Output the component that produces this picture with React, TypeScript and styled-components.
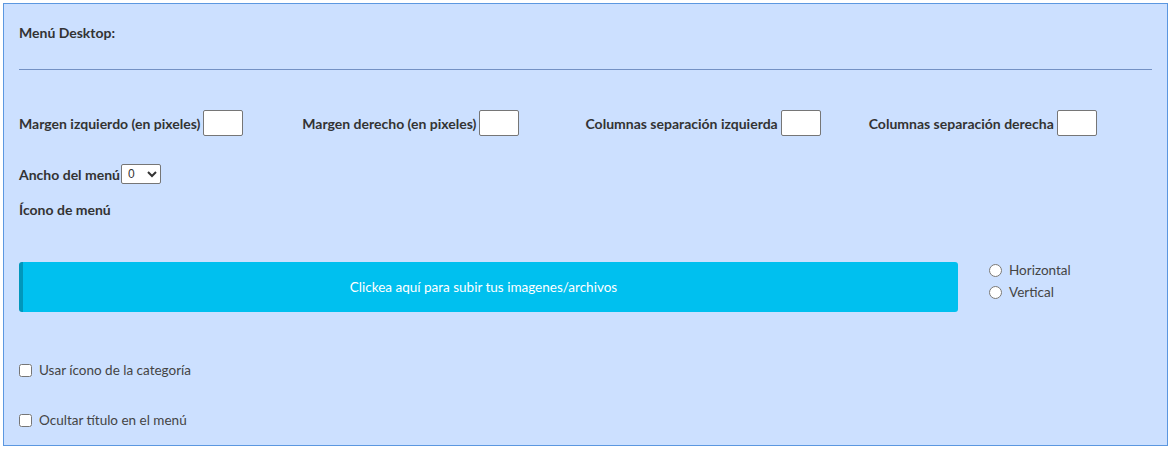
import * as React from 'react'
import styled, { createGlobalStyle } from 'styled-components'

const GlobalStyle = createGlobalStyle`
  html, body {
    margin: 0;
    padding: 0;
    background: #ffffff;
  }
  body {
    font-family: Lato, "Open Sans", "Liberation Sans", sans-serif;
    font-size: 14px;
    color: #333333;
  }
`

const Page = styled.div`
  padding: 3px 4px 4px 3px;
`

const Panel = styled.div`
  display: flex;
  flex-direction: column;
  background: #cce0ff;
  border: 1px solid #5b97e0;
  padding: 19px 15px 15px 15px;
  height: 443px;
  box-sizing: border-box;
`

const Title = styled.div`
  font-weight: 700;
  font-size: 14px;
  line-height: 20px;
  color: #333333;
`

const Divider = styled.hr`
  margin: 26px 0 0 0;
  border: none;
  border-top: 1px solid #7391c4;
  height: 0;
`

const FieldRow = styled.div`
  display: grid;
  grid-template-columns: repeat(4, 1fr);
  margin-top: 40px;
`

const Field = styled.label<{ $h?: number }>`
  display: flex;
  align-items: center;
  gap: 3px;
  font-weight: 700;
  font-size: 14px;
  color: #333333;
  height: ${(p) => p.$h ?? 26}px;
`

const NumberInput = styled.input`
  width: 40px;
  height: 26px;
  box-sizing: border-box;
  border: 1px solid #767676;
  border-radius: 2px;
  background: #ffffff;
  padding: 0 4px;
  font-size: 13px;
`

const SelectRow = styled.div`
  margin-top: 28px;
`

const Select = styled.select`
  width: 40px;
  height: 20px;
  box-sizing: border-box;
  border: 1px solid #767676;
  border-radius: 2px;
  background: #ffffff;
  font-size: 12px;
  padding: 0 2px;
  margin-left: -2px;
  color: #333333;
`

const SubTitle = styled.div`
  margin-top: 16px;
  font-weight: 700;
  font-size: 14px;
  line-height: 20px;
`

const UploadRow = styled.div`
  display: flex;
  align-items: flex-start;
  margin-top: 42px;
  gap: 31px;
`

const UploadButton = styled.button`
  width: 939px;
  height: 50px;
  background: #00c0ef;
  border: none;
  border-left: 4px solid #0097bc;
  border-radius: 3px;
  color: #ffffff;
  font-family: inherit;
  font-size: 13.5px;
  cursor: pointer;
  padding: 0 14px 0 0;
`

const RadioGroup = styled.div`
  display: flex;
  flex-direction: column;
  margin-top: -3px;
`

const Option = styled.label`
  display: flex;
  align-items: center;
  gap: 7px;
  font-size: 13.5px;
  line-height: 22px;
  color: #444444;

  input {
    margin: 0;
    width: 13px;
    height: 13px;
  }
`

const CheckRow = styled.div<{ $top: number }>`
  margin-top: ${(p) => p.$top}px;
  line-height: 20px;
`

const App: React.FC = () => {
  return (
    <>
      <GlobalStyle />
      <Page>
        <Panel>
          <Title>Menú Desktop:</Title>
          <Divider />

          <FieldRow>
            <Field>
              Margen izquierdo (en pixeles) <NumberInput type="text" />
            </Field>
            <Field>
              Margen derecho (en pixeles) <NumberInput type="text" />
            </Field>
            <Field>
              Columnas separación izquierda <NumberInput type="text" />
            </Field>
            <Field>
              Columnas separación derecha <NumberInput type="text" />
            </Field>
          </FieldRow>

          <SelectRow>
            <Field $h={20}>
              Ancho del menú
              <Select defaultValue="0">
                <option value="0">0</option>
                <option value="1">1</option>
                <option value="2">2</option>
              </Select>
            </Field>
          </SelectRow>

          <SubTitle>Ícono de menú</SubTitle>

          <UploadRow>
            <UploadButton type="button">
              Clickea aquí para subir tus imagenes/archivos
            </UploadButton>
            <RadioGroup>
              <Option>
                <input type="radio" name="orientation" /> Horizontal
              </Option>
              <Option>
                <input type="radio" name="orientation" /> Vertical
              </Option>
            </RadioGroup>
          </UploadRow>

          <CheckRow $top={47}>
            <Option>
              <input type="checkbox" /> Usar ícono de la categoría
            </Option>
          </CheckRow>
          <CheckRow $top={28}>
            <Option>
              <input type="checkbox" /> Ocultar título en el menú
            </Option>
          </CheckRow>
        </Panel>
      </Page>
    </>
  )
}

export default App
